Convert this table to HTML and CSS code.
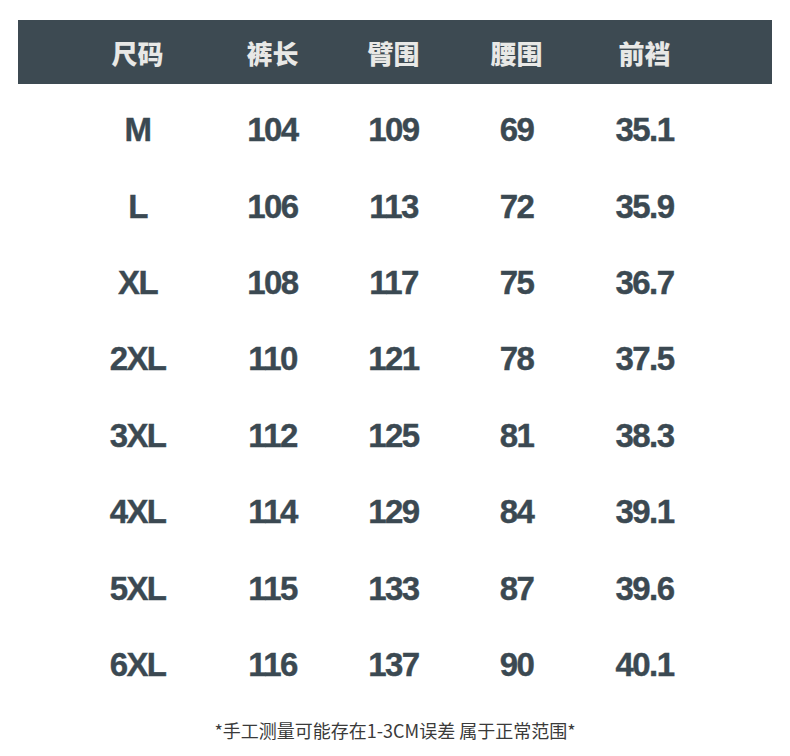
FILE: index.html
```html
<!DOCTYPE html>
<html lang="zh">
<head>
<meta charset="utf-8">
<title>尺码表</title>
<link rel="stylesheet" href="styles.css">
</head>
<body>
<div class="chart">
  <div class="head row">
    <div>尺码</div><div>裤长</div><div>臂围</div><div>腰围</div><div>前裆</div>
  </div>
  <div class="body">
    <div class="row"><div>M</div><div>104</div><div>109</div><div>69</div><div>35.1</div></div>
    <div class="row"><div>L</div><div>106</div><div>113</div><div>72</div><div>35.9</div></div>
    <div class="row"><div>XL</div><div>108</div><div>117</div><div>75</div><div>36.7</div></div>
    <div class="row"><div>2XL</div><div>110</div><div>121</div><div>78</div><div>37.5</div></div>
    <div class="row"><div>3XL</div><div>112</div><div>125</div><div>81</div><div>38.3</div></div>
    <div class="row"><div>4XL</div><div>114</div><div>129</div><div>84</div><div>39.1</div></div>
    <div class="row"><div>5XL</div><div>115</div><div>133</div><div>87</div><div>39.6</div></div>
    <div class="row"><div>6XL</div><div>116</div><div>137</div><div>90</div><div>40.1</div></div>
  </div>
  <p class="note">*手工测量可能存在1-3CM误差 属于正常范围*</p>
</div>
</body>
</html>
```
FILE: styles.css
```css
html, body {
  margin: 0;
  padding: 0;
  background: #ffffff;
}
.chart {
  width: 790px;
  height: 756px;
  padding-top: 20px;
  box-sizing: border-box;
}
.row {
  display: grid;
  grid-template-columns: 135px 135px 107px 139px 117px;
  padding-left: 52px;
  align-items: center;
  justify-items: center;
}
.head {
  margin: 0 18px;
  height: 64px;
  background: #3d4a52;
  color: #e8e8e6;
  font-family: "Noto Sans CJK SC", sans-serif;
  font-weight: 900;
  font-size: 26px;
}
.body {
  padding-top: 8px;
  margin-left: 18px;
}
.body .row {
  height: 76.4px;
  font-family: "Liberation Sans", Arial, sans-serif;
  font-weight: 700;
  font-size: 33px;
  letter-spacing: -1.6px;
  color: #3b4952;
  -webkit-text-stroke: 0.4px #3b4952;
}
.note {
  margin: 14px 0 0;
  text-align: center;
  font-family: "Noto Sans CJK SC", sans-serif;
  font-size: 18px;
  color: #3a3a3a;
}
```
